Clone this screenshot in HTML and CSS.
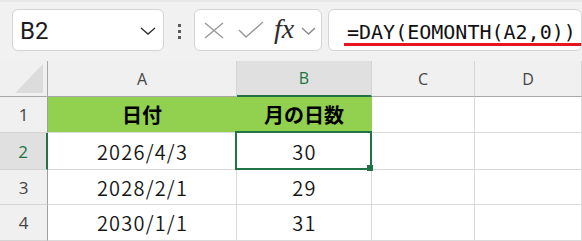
FILE: index.html
```html
<!DOCTYPE html>
<html lang="ja">
<head>
<meta charset="utf-8">
<link rel="stylesheet" href="styles.css">
</head>
<body>
<div class="toolbar">
  <div class="namebox">
    <span class="ref">B2</span>
    <svg class="chev" width="16" height="8" viewBox="0 0 16 8"><polyline points="1,1 8,7 15,1" fill="none" stroke="#333" stroke-width="1.4"/></svg>
  </div>
  <div class="dots"><i></i><i></i><i></i></div>
  <div class="fbtns">
    <svg class="ico-x" width="20" height="17" viewBox="0 0 20 17"><path d="M1 1 L19 16 M19 1 L1 16" stroke="#9a9a9a" stroke-width="1.5" fill="none"/></svg>
    <svg class="ico-ok" width="26" height="18" viewBox="0 0 26 18"><polyline points="1,9 8,16 25,1" fill="none" stroke="#9a9a9a" stroke-width="1.5"/></svg>
    <span class="fx">fx</span>
    <svg class="chev2" width="15" height="8" viewBox="0 0 15 8"><polyline points="1,1 7.5,7 14,1" fill="none" stroke="#8a8a8a" stroke-width="1.4"/></svg>
  </div>
  <div class="fbar"><span class="formula">=DAY(EOMONTH(A2,0))</span></div>
</div>
<div class="sheet">
  <div class="cell corner"><svg width="30" height="31" viewBox="0 0 30 31"><polygon points="1,30 29,30 29,1" fill="#dcdcdc"/></svg></div>
  <div class="cell colhead">A</div>
  <div class="cell colhead active">B</div>
  <div class="cell colhead">C</div>
  <div class="cell colhead">D</div>

  <div class="cell rowhead">1</div>
  <div class="cell data hdr">日付</div>
  <div class="cell data hdr">月の日数</div>
  <div class="cell data"></div>
  <div class="cell data"></div>

  <div class="cell rowhead active">2</div>
  <div class="cell data num">2026/4/3</div>
  <div class="cell data num">30</div>
  <div class="cell data"></div>
  <div class="cell data"></div>

  <div class="cell rowhead">3</div>
  <div class="cell data num">2028/2/1</div>
  <div class="cell data num">29</div>
  <div class="cell data"></div>
  <div class="cell data"></div>

  <div class="cell rowhead">4</div>
  <div class="cell data num">2030/1/1</div>
  <div class="cell data num">31</div>
  <div class="cell data"></div>
  <div class="cell data"></div>

  <div class="sel"></div>
  <div class="handle"></div>
</div>
</body>
</html>
```
FILE: styles.css
```css
* { box-sizing: border-box; }
html, body { margin: 0; padding: 0; }
body {
  width: 582px;
  height: 241px;
  overflow: hidden;
  background: #f0f0f0;
  font-family: "Noto Sans CJK JP", "Noto Sans", sans-serif;
}
.toolbar {
  height: 61px;
  display: flex;
  align-items: flex-start;
  padding: 9px 0 0 12px;
  background: #f1f1f1;
  border-top: 2px solid #e8e8e8;
}
.namebox {
  width: 152px;
  height: 42px;
  margin-top: -2px;
  background: #fff;
  border: 1px solid #d4d4d4;
  border-radius: 6px;
  display: flex;
  align-items: center;
  justify-content: space-between;
  padding: 0 7px 0 7px;
}
.ref {
  font-family: Roboto, "Liberation Sans", sans-serif;
  font-size: 24px;
  color: #1c1c1c;
  line-height: 1;
  margin-top: 2px;
}
.chev { margin-top: 1px; }
.dots {
  width: 30px;
  height: 40px;
  display: flex;
  flex-direction: column;
  align-items: center;
  justify-content: center;
  gap: 3px;
}
.dots i {
  display: block;
  width: 3px;
  height: 3px;
  background: #5a5a5a;
}
.fbtns {
  width: 128px;
  height: 42px;
  margin-top: -2px;
  background: #fff;
  border: 1px solid #d4d4d4;
  border-radius: 6px;
  display: flex;
  align-items: center;
  padding: 0 0 0 9px;
}
.ico-x { margin-right: 14px; }
.ico-ok { margin-right: 10px; }
.fx {
  font-family: "Liberation Serif", serif;
  font-style: italic;
  font-size: 28px;
  color: #2b2b2b;
  line-height: 1;
  margin-right: 7px;
  margin-top: -3px;
}
.chev2 { margin-top: 1px; }
.fbar {
  width: 254px;
  height: 42px;
  margin-left: 6px;
  margin-top: -2px;
  background: #fff;
  border: 1px solid #d4d4d4;
  border-radius: 6px;
  padding: 10px 0 0 15px;
}
.formula {
  display: inline-block;
  font-family: "DejaVu Sans Mono", "Liberation Mono", monospace;
  font-size: 20px;
  line-height: 22px;
  color: #111;
  padding: 0 5px 0 3px;
  border-bottom: 3px solid #e8141e;
}
.sheet {
  position: relative;
  display: grid;
  grid-template-columns: 48px 189px 135px 103px 107px;
  grid-template-rows: 36px 36px 37px 35px 36px;
  background: #fff;
}
.cell {
  display: flex;
  align-items: center;
  justify-content: center;
  border-right: 1px solid #dadada;
  border-bottom: 1px solid #dadada;
}
.corner {
  background: #f0f0f0;
  border-right: 1px solid #a8a8a8;
  border-bottom: 1px solid #a8a8a8;
  align-items: flex-end;
  justify-content: flex-end;
  padding: 0 3px 2px 0;
}
.colhead {
  background: #f0f0f0;
  border-bottom: 1px solid #a8a8a8;
  border-right: 1px solid #d4d4d4;
  font-family: "Open Sans", "Noto Sans", sans-serif;
  font-size: 16px;
  color: #444;
}
.colhead.active {
  background: #e0e0e0;
  border-bottom: 2px solid #217346;
  color: #217346;
}
.rowhead {
  background: #f0f0f0;
  border-right: 1px solid #a0a0a0;
  border-bottom: 1px solid #d4d4d4;
  font-family: "Open Sans", "Noto Sans", sans-serif;
  font-size: 17px;
  color: #444;
}
.rowhead.active {
  background: #e0e0e0;
  border-right: 2px solid #217346;
  color: #217346;
}
.data {
  font-size: 20px;
  color: #151515;
}
.num {
  font-weight: 350;
  letter-spacing: 1.2px;
  padding-left: 1px;
}
.hdr {
  background: #92d050;
  border-right-color: #92d050;
  font-weight: 700;
  color: #000;
}
.sel {
  position: absolute;
  left: 235px;
  top: 70px;
  width: 137px;
  height: 39px;
  border: 2px solid #217346;
}
.handle {
  position: absolute;
  left: 367px;
  top: 104px;
  width: 6px;
  height: 6px;
  background: #217346;
}
```
